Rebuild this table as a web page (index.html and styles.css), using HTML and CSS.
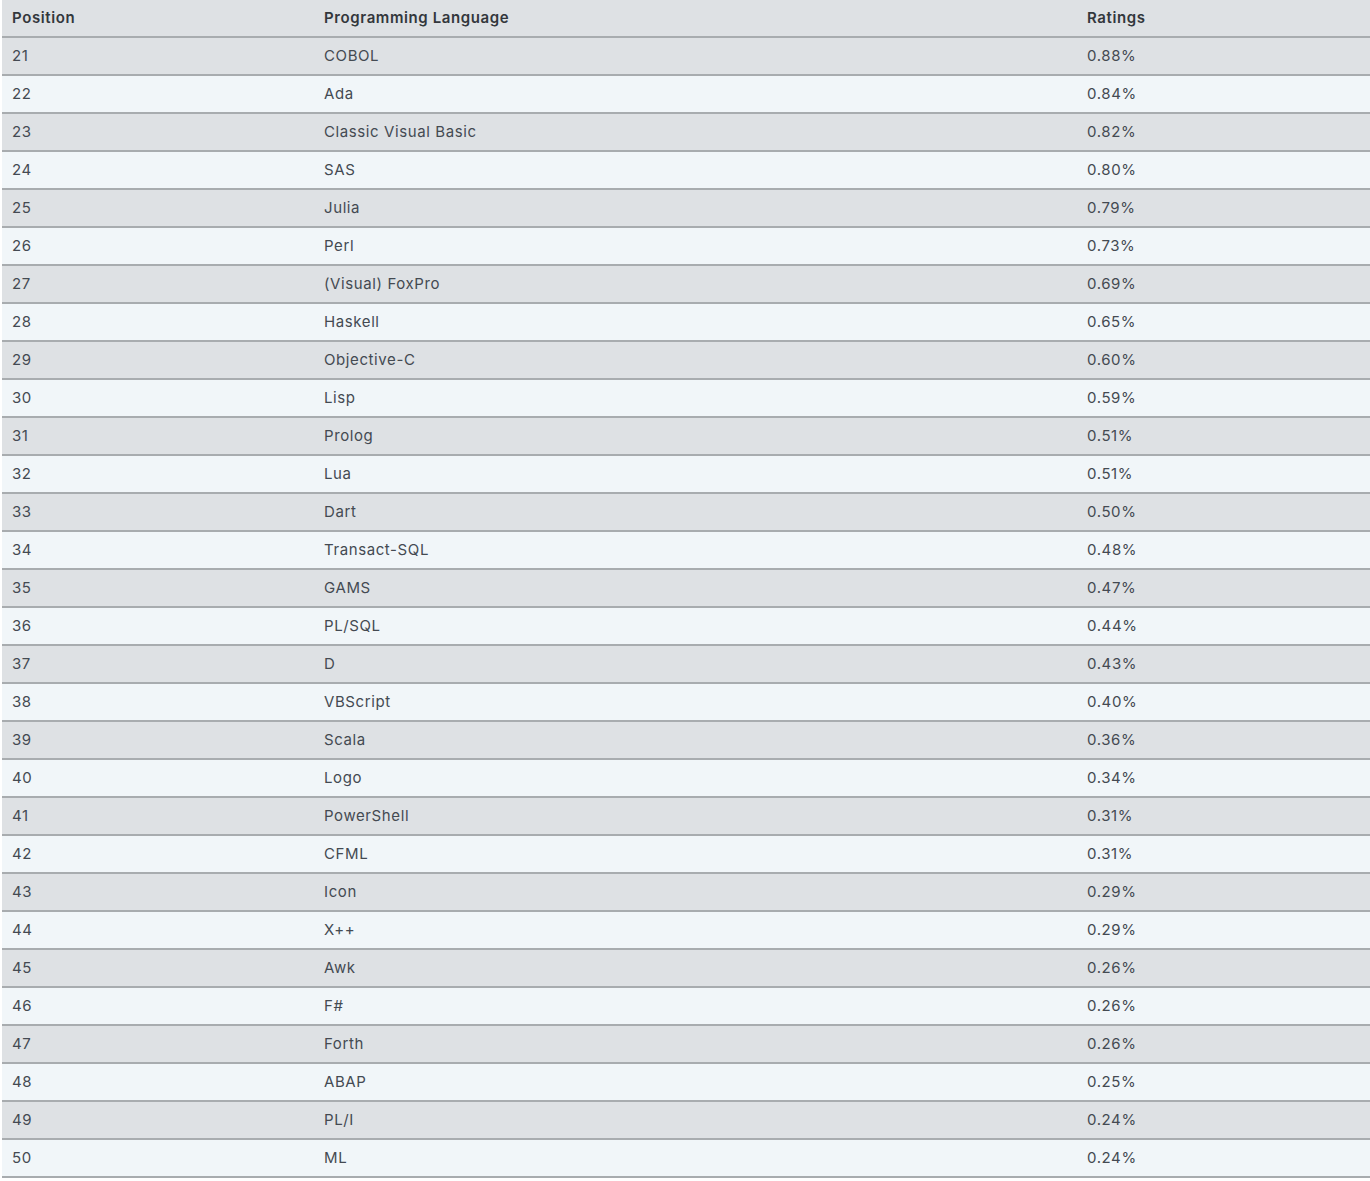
FILE: index.html
```html
<!DOCTYPE html>
<html>
<head>
<meta charset="utf-8">
<link rel="stylesheet" href="styles.css">
</head>
<body>
<table class="ranking">
<thead>
<tr><th class="c1">Position</th><th class="c2">Programming Language</th><th class="c3">Ratings</th></tr>
</thead>
<tbody>
<tr><td>21</td><td>COBOL</td><td>0.88%</td></tr>
<tr><td>22</td><td>Ada</td><td>0.84%</td></tr>
<tr><td>23</td><td>Classic Visual Basic</td><td>0.82%</td></tr>
<tr><td>24</td><td>SAS</td><td>0.80%</td></tr>
<tr><td>25</td><td>Julia</td><td>0.79%</td></tr>
<tr><td>26</td><td>Perl</td><td>0.73%</td></tr>
<tr><td>27</td><td>(Visual) FoxPro</td><td>0.69%</td></tr>
<tr><td>28</td><td>Haskell</td><td>0.65%</td></tr>
<tr><td>29</td><td>Objective-C</td><td>0.60%</td></tr>
<tr><td>30</td><td>Lisp</td><td>0.59%</td></tr>
<tr><td>31</td><td>Prolog</td><td>0.51%</td></tr>
<tr><td>32</td><td>Lua</td><td>0.51%</td></tr>
<tr><td>33</td><td>Dart</td><td>0.50%</td></tr>
<tr><td>34</td><td>Transact-SQL</td><td>0.48%</td></tr>
<tr><td>35</td><td>GAMS</td><td>0.47%</td></tr>
<tr><td>36</td><td>PL/SQL</td><td>0.44%</td></tr>
<tr><td>37</td><td>D</td><td>0.43%</td></tr>
<tr><td>38</td><td>VBScript</td><td>0.40%</td></tr>
<tr><td>39</td><td>Scala</td><td>0.36%</td></tr>
<tr><td>40</td><td>Logo</td><td>0.34%</td></tr>
<tr><td>41</td><td>PowerShell</td><td>0.31%</td></tr>
<tr><td>42</td><td>CFML</td><td>0.31%</td></tr>
<tr><td>43</td><td>Icon</td><td>0.29%</td></tr>
<tr><td>44</td><td>X++</td><td>0.29%</td></tr>
<tr><td>45</td><td>Awk</td><td>0.26%</td></tr>
<tr><td>46</td><td>F#</td><td>0.26%</td></tr>
<tr><td>47</td><td>Forth</td><td>0.26%</td></tr>
<tr><td>48</td><td>ABAP</td><td>0.25%</td></tr>
<tr><td>49</td><td>PL/I</td><td>0.24%</td></tr>
<tr><td>50</td><td>ML</td><td>0.24%</td></tr>
</tbody>
</table>
</body>
</html>
```
FILE: styles.css
```css
html, body {
  margin: 0;
  padding: 0;
  background: #ffffff;
}
body {
  padding-left: 2px;
  font-family: Inter, "Liberation Sans", sans-serif;
  color: #444a52;
}
.ranking {
  width: 1368px;
  border-collapse: collapse;
  table-layout: fixed;
  font-size: 15px;
  letter-spacing: 0.6px;
}
.ranking th,
.ranking td {
  height: 35px;
  padding: 0 0 1px 10px;
  text-align: left;
  vertical-align: middle;
  border-bottom: 2px solid #a8acaf;
  white-space: nowrap;
}
.ranking th {
  font-weight: 600;
  color: #33373c;
  background: #dee1e4;
}
.ranking .c1 { width: 302px; }
.ranking .c2 { width: 753px; }
.ranking .c3 { width: 283px; }
.ranking tbody tr:nth-child(odd) td { background: #dee1e4; }
.ranking tbody tr:nth-child(even) td { background: #f1f6f9; }
```
